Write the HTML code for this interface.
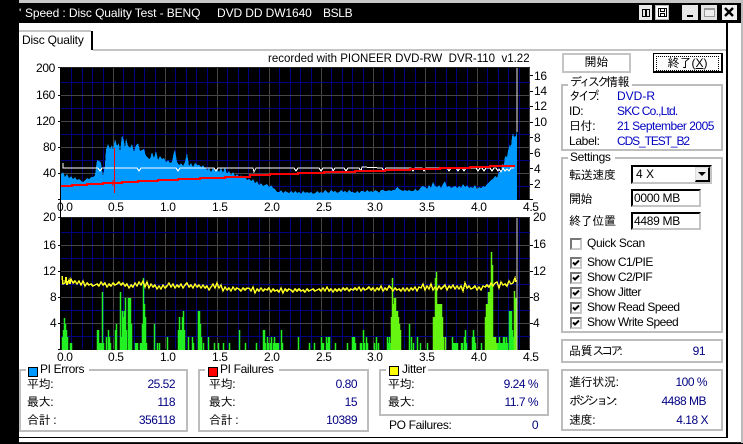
<!DOCTYPE html>
<html><head><meta charset="utf-8"><style>
html,body{margin:0;padding:0;width:743px;height:444px;overflow:hidden;background:#000}
body{position:relative;font:12px/14px "Liberation Sans","IPAGothic","Noto Sans CJK JP",sans-serif;color:#000}
.a{position:absolute}
.t{position:absolute;white-space:pre;line-height:14px;height:14px;letter-spacing:-.35px}
.b{color:#000080;letter-spacing:-.5px}
.k{letter-spacing:-3px}
.g{position:absolute;border:2px solid #bdbdbd;box-sizing:border-box}
.w{position:absolute;background:#fff;height:6px}
.s{position:absolute;width:8px;height:8px;border:1px solid #000}
.c{position:absolute;width:12px;height:12px;box-sizing:border-box;border:2px solid;border-color:#777 #c8c8c8 #c8c8c8 #777;background:#fff;left:570px}
.c svg{position:absolute;left:0;top:0}
.i{position:absolute;box-sizing:border-box;background:#fff;border:2px solid;border-color:#000 #c4c4c4 #c4c4c4 #000}
.tb{position:absolute;top:5px;height:15px;background:#e8e8e8;box-sizing:border-box}
</style></head><body>
<div class="a" style="left:19px;top:0;width:724px;height:3px;background:#c8c8c8"></div>
<div class="a" style="left:19px;top:23px;width:722px;height:420px;background:#fff"></div>
<div class="a" style="left:726px;top:23px;width:2px;height:415px;background:#000"></div>
<div class="a" style="left:19px;top:437px;width:709px;height:1px;background:#000"></div>
<div class="a" style="left:19px;top:442px;width:722px;height:1px;background:#222"></div>
<div class="a" style="left:741px;top:0;width:2px;height:444px;background:#bbb"></div>
<div class="a" style="left:19px;top:443px;width:724px;height:1px;background:#000"></div>
<div class="t" style="left:19px;top:6px;color:#fff">'</div>
<div class="t" style="left:25px;top:6px;color:#fff;letter-spacing:-.1px">Speed : Disc Quality Test - BENQ</div>
<div class="t" style="left:217px;top:6px;color:#fff;letter-spacing:-.1px">DVD DD DW1640</div>
<div class="t" style="left:323px;top:6px;color:#fff">BSLB</div>

<div class="tb" style="left:639px;width:13px"></div>
<div class="tb" style="left:655px;width:14px;background:#fff;border:1px solid #bbb"></div>
<div class="tb" style="left:682px;width:16px"><div class="a" style="left:5px;top:10px;width:6px;height:2px;background:#000"></div></div>
<div class="tb" style="left:701px;width:16px;background:#e4e4e4"><div class="a" style="left:3px;top:3px;width:11px;height:9px;border:1px solid #999;border-top-width:2px;box-sizing:border-box;background:#eee"></div></div>
<div class="tb" style="left:722px;width:15px;background:#f0f0f0"></div>
<svg class="a" style="left:0;top:0" width="743" height="30"><g fill="none" stroke="#000" shape-rendering="crispEdges"><path d="M642.5 9.5h3v7h-3zM646.5 9.5h3v7h-3z"/><path d="M658.5 8.5h8v8h-8zM660.5 8.5h4v3h-4zM660.5 13.5h4v3h-4z"/><path d="M725 8l8 8M733 8l-8 8" stroke-width="2.4" shape-rendering="auto"/></g></svg>

<div class="a" style="left:19px;top:30px;width:72px;height:2px;background:#c4c4c4"></div>
<div class="a" style="left:91px;top:31px;width:2px;height:19px;background:#000"></div>
<div class="a" style="left:93px;top:49px;width:633px;height:2px;background:#c4c4c4"></div>
<div class="t" style="left:22px;top:33px;letter-spacing:-.2px">Disc Quality</div>
<div class="t" style="left:268px;top:52px;font-size:11.5px;letter-spacing:0">recorded with PIONEER DVD-RW  DVR-110  v1.22</div>

<svg class="a" style="left:0;top:0" width="743" height="444">
<rect x="61" y="68" width="469" height="132" fill="#000"/>
<rect x="61" y="218" width="469" height="132" fill="#000"/>
<g shape-rendering="crispEdges" fill="none">
<path stroke="#222" d="M58 67.5H530M58 217.5H530"/>
<g id="v"><path stroke="#000080" d="M71.5 68V200M82.5 68V200M92.5 68V200M103.5 68V200M123.5 68V200M134.5 68V200M144.5 68V200M155.5 68V200M175.5 68V200M186.5 68V200M196.5 68V200M207.5 68V200M227.5 68V200M238.5 68V200M248.5 68V200M259.5 68V200M279.5 68V200M290.5 68V200M300.5 68V200M311.5 68V200M331.5 68V200M342.5 68V200M352.5 68V200M363.5 68V200M383.5 68V200M394.5 68V200M404.5 68V200M415.5 68V200M435.5 68V200M446.5 68V200M456.5 68V200M467.5 68V200M487.5 68V200M498.5 68V200M508.5 68V200M519.5 68V200"/>
<path stroke="#454545" d="M113.5 68V200M165.5 68V200M217.5 68V200M269.5 68V200M321.5 68V200M373.5 68V200M425.5 68V200M477.5 68V200M529.5 68V200"/></g>
<use href="#v" y="150"/>
<path stroke="#000080" d="M61 82.5H530M61 108.5H530M61 134.5H530M61 160.5H530M61 186.5H530M61 232.5H530M61 258.5H530M61 284.5H530M61 310.5H530M61 336.5H530"/>
<path stroke="#454545" d="M61 95.5H530M61 121.5H530M61 147.5H530M61 173.5H530M61 245.5H530M61 271.5H530M61 297.5H530M61 323.5H530"/>
<path stroke="#000" d="M58 95.5h3M58 121.5h3M58 147.5h3M58 173.5h3M58 199.5h3M58 245.5h3M58 271.5h3M58 297.5h3M58 323.5h3M58 349.5h3M530 75.5h3M530 91.5h3M530 106.5h3M530 122.5h3M530 137.5h3M530 153.5h3M530 168.5h3M530 184.5h3M530 199.5h3M530 245.5h3M530 271.5h3M530 297.5h3M530 323.5h3M60.5 68V350M60.5 218V350M58 349.5H530M58 199.5H530"/>
</g>
<g shape-rendering="crispEdges">
<polygon fill="#0099ff" points="61,200 61,174 63,172 65,177 67,174 69,178 71,176 73,179 75,177 77,180 79,179 81,181 83,182 85,180 87,178 89,179 91,177 93,177 95,175 97,160 99,161 101,163 103,176 105,165 106,150 108,144 110,149 112,145 113,150 115,139 117,146 119,143 120,152 122,135 124,141 125,148 126,138 128,146 130,148 132,144 134,152 136,145 138,143 140,151 142,150 144,149 146,156 148,158 150,159 152,152 154,158 156,151 158,160 160,156 162,159 164,158 166,162 168,160 170,163 172,162 174,152 175,150 177,162 179,165 181,163 183,166 185,162 187,153 189,166 191,163 193,167 195,163 197,165 199,165 201,167 203,165 205,168 207,170 209,168 211,172 213,168 215,171 217,170 219,172 221,168 223,173 225,167 227,174 229,171 231,175 233,172 235,176 237,174 239,177 241,175 243,178 245,176 247,180 249,179 251,181 253,179 255,183 257,181 259,185 261,183 263,186 265,185 267,184 269,187 271,185 273,188 275,189 277,192 279,192 281,190 283,193 285,191 287,192 289,193 291,191 293,193 295,191 297,193 299,192 301,194 303,191 305,193 307,192 309,193 311,192 313,194 315,193 317,191 319,193 321,192 323,193 325,190 327,192 329,193 331,190 333,192 335,191 337,193 339,192 341,190 343,192 345,191 347,193 349,190 351,192 353,192 355,193 357,191 359,193 361,191 363,191 365,192 367,190 369,192 371,191 373,192 375,190 377,191 379,193 381,190 383,190 385,191 387,191 389,190 391,191 393,190 395,190 397,187 399,189 401,190 403,191 405,190 407,191 409,190 411,191 413,191 415,189 417,191 419,190 421,187 423,186 425,187 427,189 429,185 431,188 433,182 435,186 437,187 439,185 441,188 443,184 445,181 447,187 449,186 451,188 453,187 455,186 457,188 459,186 461,188 463,184 465,187 467,185 469,188 471,187 473,188 475,185 477,189 479,187 481,188 483,186 485,187 487,184 489,182 491,180 493,179 495,176 497,178 499,172 501,172 502,164 504,165 505,156 507,157 508,151 510,144 511,147 512,137 513,133 514,137 516,136 517,130 517,200"/>
<polyline fill="none" stroke="#fff" stroke-width="1" points="63,163 63,168 98,168 100,171 102,168 137,168 139,171 141,168 176,168 178,171 180,168 214,168 216,171 218,168 253,168 254,172 256,168 294,168 296,171 298,168 319,168 321,171 323,168 332,168 333,171 335,168 344,168 346,171 348,168 359,168 361,171 362,167 382,168 384,171 386,168 411,168 413,171 415,168 422,168 424,171 426,168 447,168 449,171 451,168 456,168 458,171 460,168 462,168 464,171 466,168 476,168 478,171 480,168 482,168 484,171 486,168 490,168 492,171 494,168 496,168 498,171 499,169 501,172 503,168 505,171 507,169 509,171 511,168 514,168"/>
<polyline fill="none" stroke="#f00" stroke-width="2" points="61,186 72,186 72,185 87,185 87,184 103,184 103,183 122,183 122,182 138,182 138,181 158,181 158,180 178,180 178,179 200,179 200,178 225,178 225,177 250,177 250,175 270,175 270,174 298,174 298,173 324,173 324,172 355,172 355,171 385,171 385,170 410,170 410,169 440,169 440,168 470,168 470,167 490,167 490,166 515,166"/>
<path d="M114.5 148V193M113 180V186" stroke="#f00" stroke-width="1" fill="none"/>
<path d="M517 68V132" stroke="#e8e8e8" stroke-width="1"/>
<path fill="none" stroke="#22f022" stroke-width="1.5" shape-rendering="auto" d="M62.5 350v-13M63.5 350v-20M64.5 350v-32M65.5 350v-26M66.5 350v-20M67.5 350v-13M70.5 350v-7M71.5 350v-7M97.5 350v-20M98.5 350v-20M99.5 350v-7M100.5 350v-7M101.5 350v-7M102.5 350v-58M103.5 350v-7M106.5 350v-13M108.5 350v-20M109.5 350v-13M110.5 350v-7M115.5 350v-20M116.5 350v-26M120.5 350v-58M121.5 350v-13M122.5 350v-39M123.5 350v-33M124.5 350v-39M125.5 350v-52M126.5 350v-20M128.5 350v-52M129.5 350v-52M130.5 350v-52M131.5 350v-26M135.5 350v-7M136.5 350v-7M137.5 350v-7M140.5 350v-7M141.5 350v-7M142.5 350v-26M143.5 350v-72M144.5 350v-46M145.5 350v-33M146.5 350v-7M154.5 350v-26M157.5 350v-7M159.5 350v-7M167.5 350v-13M178.5 350v-20M179.5 350v-33M180.5 350v-20M181.5 350v-20M182.5 350v-33M183.5 350v-39M184.5 350v-20M188.5 350v-13M192.5 350v-13M193.5 350v-7M198.5 350v-39M199.5 350v-39M200.5 350v-26M201.5 350v-13M203.5 350v-7M208.5 350v-13M214.5 350v-7M218.5 350v-7M223.5 350v-7M229.5 350v-7M239.5 350v-20M245.5 350v-7M256.5 350v-7M263.5 350v-20M264.5 350v-20M265.5 350v-7M267.5 350v-13M268.5 350v-7M270.5 350v-7M271.5 350v-13M273.5 350v-7M274.5 350v-13M275.5 350v-7M276.5 350v-7M277.5 350v-7M278.5 350v-7M281.5 350v-20M282.5 350v-7M298.5 350v-13M309.5 350v-7M314.5 350v-7M321.5 350v-13M322.5 350v-7M323.5 350v-7M326.5 350v-13M327.5 350v-7M328.5 350v-13M329.5 350v-13M335.5 350v-7M347.5 350v-7M352.5 350v-13M353.5 350v-13M354.5 350v-13M355.5 350v-7M360.5 350v-7M361.5 350v-7M363.5 350v-20M364.5 350v-7M366.5 350v-13M367.5 350v-7M374.5 350v-7M376.5 350v-13M378.5 350v-7M387.5 350v-13M388.5 350v-7M389.5 350v-13M390.5 350v-7M409.5 350v-26M411.5 350v-13M413.5 350v-7M417.5 350v-13M420.5 350v-7M427.5 350v-7M452.5 350v-13M453.5 350v-7M454.5 350v-7M455.5 350v-7M456.5 350v-7M457.5 350v-7M461.5 350v-7M462.5 350v-7M464.5 350v-13M465.5 350v-20M466.5 350v-7M472.5 350v-13M473.5 350v-20M474.5 350v-13M475.5 350v-7M481.5 350v-7M497.5 350v-7M498.5 350v-7M499.5 350v-13M500.5 350v-7M501.5 350v-7M502.5 350v-7M503.5 350v-13M504.5 350v-13M505.5 350v-7M506.5 350v-13M507.5 350v-7M509.5 350v-39M510.5 350v-39M511.5 350v-39M512.5 350v-20M513.5 350v-13"/>
<path fill="none" stroke="#66f510" stroke-width="1.5" shape-rendering="auto" d="M391.5 350v-33M392.5 350v-72M393.5 350v-46M394.5 350v-52M395.5 350v-52M396.5 350v-39M397.5 350v-39M398.5 350v-33M399.5 350v-26M400.5 350v-20M433.5 350v-33M434.5 350v-33M435.5 350v-72M436.5 350v-78M437.5 350v-46M438.5 350v-46M439.5 350v-46M440.5 350v-46M441.5 350v-46M442.5 350v-33M443.5 350v-13M445.5 350v-13M485.5 350v-33M486.5 350v-46M487.5 350v-46M488.5 350v-58M489.5 350v-58M490.5 350v-65M491.5 350v-98M492.5 350v-85M493.5 350v-13M494.5 350v-13M495.5 350v-13M496.5 350v-7M514.5 350v-59M515.5 350v-52M516.5 350v-52"/>
<path d="M517 218V350" stroke="#d8d8d8" stroke-width="1"/>
<polyline fill="none" stroke="#ffff22" stroke-width="1.5" points="62,276 63,284 65,283 66,277 67,285 69,280 70,284 71,279 73,283 75,281 77,284 79,281 81,285 83,281 85,286 87,283 89,285 91,284 93,286 95,285 97,284 99,286 101,282 103,285 105,283 107,287 109,284 111,286 113,283 115,285 117,284 119,282 121,285 123,283 125,286 127,284 129,288 131,285 133,287 135,283 137,286 139,282 141,285 143,281 145,287 147,282 149,288 151,284 153,287 155,285 157,289 159,286 161,289 163,285 165,288 167,286 169,283 171,287 173,284 175,288 177,285 179,287 181,284 183,288 185,285 187,283 189,287 191,285 193,288 195,284 197,287 199,285 201,288 203,285 205,288 207,286 209,290 211,287 213,284 215,288 217,283 219,288 221,285 223,291 225,287 227,290 229,288 231,291 233,287 235,290 237,288 239,289 241,291 243,288 245,290 247,288 249,288 251,291 253,287 255,293 257,289 259,291 261,288 263,291 265,289 267,290 269,288 271,292 273,289 275,291 277,290 279,292 281,288 283,293 285,289 287,291 289,289 291,290 293,292 295,289 297,291 299,289 301,291 303,290 305,292 307,289 309,291 311,290 313,289 315,291 317,290 319,289 321,291 323,288 325,291 327,287 329,291 331,289 333,292 335,289 337,291 339,289 341,291 343,288 345,290 347,288 349,291 351,289 353,290 355,288 357,290 359,287 361,291 363,288 365,290 367,289 369,287 371,290 373,288 375,291 377,288 379,290 381,286 383,291 385,288 387,290 389,286 391,288 393,291 395,288 397,290 399,289 401,291 403,288 405,291 407,288 409,291 411,288 413,290 415,287 417,291 419,287 421,288 423,284 425,290 427,286 429,289 431,284 433,290 435,287 437,290 439,286 441,289 443,287 445,285 447,290 449,286 451,288 453,285 455,289 457,286 459,289 461,286 463,291 465,283 467,288 469,286 471,289 473,288 475,286 477,290 479,287 481,290 483,286 485,287 487,285 489,287 491,283 493,286 495,283 497,282 499,288 501,282 503,285 505,284 507,286 509,281 511,284 513,283 515,278 516,282"/>
</g>
</svg>

<div class="t" style="left:36px;top:61px">200</div><div class="t" style="left:36px;top:88px">160</div><div class="t" style="left:36px;top:114px">120</div><div class="t" style="left:43px;top:140px">80</div><div class="t" style="left:43px;top:166px">40</div>
<div class="t" style="left:43px;top:210px">20</div><div class="t" style="left:43px;top:238px">16</div><div class="t" style="left:43px;top:264px">12</div><div class="t" style="left:50px;top:290px">8</div><div class="t" style="left:50px;top:316px">4</div>
<div class="t" style="left:534px;top:69px">16</div><div class="t" style="left:534px;top:84px">14</div><div class="t" style="left:534px;top:99px">12</div><div class="t" style="left:534px;top:115px">10</div><div class="t" style="left:534px;top:131px">8</div><div class="t" style="left:534px;top:146px">6</div><div class="t" style="left:534px;top:162px">4</div><div class="t" style="left:534px;top:177px">2</div>
<div class="t" style="left:533px;top:210px">20</div><div class="t" style="left:533px;top:237px">16</div><div class="t" style="left:533px;top:264px">12</div><div class="t" style="left:533px;top:290px">8</div><div class="t" style="left:533px;top:316px">4</div>

<div class="t" style="left:57px;top:200px">0.0</div><div class="t" style="left:108px;top:200px">0.5</div><div class="t" style="left:160px;top:200px">1.0</div><div class="t" style="left:212px;top:200px">1.5</div><div class="t" style="left:264px;top:200px">2.0</div><div class="t" style="left:316px;top:200px">2.5</div><div class="t" style="left:367px;top:200px">3.0</div><div class="t" style="left:419px;top:200px">3.5</div><div class="t" style="left:471px;top:200px">4.0</div><div class="t" style="left:523px;top:200px">4.5</div>
<div class="t" style="left:57px;top:350px">0.0</div><div class="t" style="left:108px;top:350px">0.5</div><div class="t" style="left:160px;top:350px">1.0</div><div class="t" style="left:212px;top:350px">1.5</div><div class="t" style="left:264px;top:350px">2.0</div><div class="t" style="left:316px;top:350px">2.5</div><div class="t" style="left:367px;top:350px">3.0</div><div class="t" style="left:419px;top:350px">3.5</div><div class="t" style="left:471px;top:350px">4.0</div><div class="t" style="left:523px;top:350px">4.5</div>

<div class="g" style="left:19px;top:369px;width:169px;height:63px"></div>
<div class="w" style="left:26px;top:366px;width:63px"></div>
<div class="s" style="left:28px;top:367px;background:#0099ff"></div>
<div class="t" style="left:40px;top:362px">PI Errors</div>
<div class="t" style="left:27px;top:377px">平均:</div><div class="t b" style="right:568px;top:377px">25.52</div>
<div class="t" style="left:27px;top:395px">最大:</div><div class="t b" style="right:568px;top:395px">118</div>
<div class="t" style="left:27px;top:413px">合計 :</div><div class="t b" style="right:568px;top:413px">356118</div>

<div class="g" style="left:198px;top:369px;width:171px;height:63px"></div>
<div class="w" style="left:205px;top:366px;width:74px"></div>
<div class="s" style="left:208px;top:367px;background:#f00"></div>
<div class="t" style="left:220px;top:362px">PI Failures</div>
<div class="t" style="left:209px;top:377px">平均:</div><div class="t b" style="right:386px;top:377px">0.80</div>
<div class="t" style="left:209px;top:395px">最大:</div><div class="t b" style="right:386px;top:395px">15</div>
<div class="t" style="left:209px;top:413px">合計 :</div><div class="t b" style="right:386px;top:413px">10389</div>

<div class="g" style="left:379px;top:369px;width:170px;height:47px"></div>
<div class="w" style="left:386px;top:366px;width:42px"></div>
<div class="s" style="left:389px;top:366px;background:#ff0"></div>
<div class="t" style="left:402px;top:362px">Jitter</div>
<div class="t" style="left:388px;top:377px">平均:</div><div class="t b" style="right:205px;top:377px">9.24 %</div>
<div class="t" style="left:388px;top:395px">最大:</div><div class="t b" style="right:205px;top:395px">11.7 %</div>
<div class="t" style="left:389px;top:418px">PO Failures:</div><div class="t b" style="right:205px;top:418px">0</div>

<div class="a" style="left:562px;top:53px;width:69px;height:20px;box-sizing:border-box;border:2px solid #c4c4c4;text-align:center;line-height:15px">開始</div>
<div class="a" style="left:653px;top:53px;width:70px;height:20px;box-sizing:border-box;border:1px solid #000;border-right-width:2px;border-bottom-width:2px;padding:2px"><div style="border:1px dotted #000;height:13px;line-height:13px;text-align:center">終了(<u>X</u>)</div></div>

<div class="g" style="left:561px;top:84px;width:162px;height:67px"></div>
<div class="w" style="left:568px;top:81px;width:64px"></div>
<div class="t" style="left:570px;top:75px"><span class="k">ディスク</span>情報</div>
<div class="t" style="left:569px;top:89px"><span class="k">タイプ</span>:</div><div class="t b" style="left:617px;top:89px;color:#0000c0;letter-spacing:0">DVD-R</div>
<div class="t" style="left:569px;top:104px">ID:</div><div class="t b" style="left:617px;top:104px;color:#0000c0;letter-spacing:-.8px">SKC Co.,Ltd.</div>
<div class="t" style="left:569px;top:119px">日付:</div><div class="t b" style="left:617px;top:119px;color:#0000c0">21 September 2005</div>
<div class="t" style="left:569px;top:134px">Label:</div><div class="t b" style="left:617px;top:134px;color:#0000c0;letter-spacing:-1.1px">CDS_TEST_B2</div>

<div class="g" style="left:561px;top:157px;width:162px;height:176px"></div>
<div class="w" style="left:568px;top:154px;width:47px"></div>
<div class="t" style="left:570px;top:150px">Settings</div>
<div class="t" style="left:569px;top:168px">転送速度</div>
<div class="i" style="left:631px;top:165px;width:81px;height:19px;line-height:15px;padding-left:3px">4 X</div>
<div class="a" style="left:695px;top:167px;width:15px;height:15px;box-sizing:border-box;background:#eee;border:1px solid #000;border-width:1px 2px 2px 1px;border-color:#ddd #000 #000 #ddd"></div>
<svg class="a" style="left:698px;top:172px" width="9" height="5"><path d="M0 0h8L4 4z" fill="#000"/></svg>
<div class="t" style="left:569px;top:192px">開始</div>
<div class="i" style="left:631px;top:189px;width:70px;height:18px;line-height:14px;padding-left:1px;letter-spacing:-.3px">0000 MB</div>
<div class="t" style="left:569px;top:214px">終了位置</div>
<div class="i" style="left:631px;top:212px;width:70px;height:18px;line-height:14px;padding-left:1px;letter-spacing:-.3px">4489 MB</div>

<div class="c" style="top:238px"></div><div class="t" style="left:587px;top:236px">Quick Scan</div>
<div class="c" style="top:257px"><svg width="8" height="8"><path d="M1 3.5l2 2 4-4" fill="none" stroke="#000" stroke-width="2"/></svg></div><div class="t" style="left:587px;top:255px;letter-spacing:-.5px">Show C1/PIE</div>
<div class="c" style="top:272px"><svg width="8" height="8"><path d="M1 3.5l2 2 4-4" fill="none" stroke="#000" stroke-width="2"/></svg></div><div class="t" style="left:587px;top:270px;letter-spacing:-.5px">Show C2/PIF</div>
<div class="c" style="top:287px"><svg width="8" height="8"><path d="M1 3.5l2 2 4-4" fill="none" stroke="#000" stroke-width="2"/></svg></div><div class="t" style="left:587px;top:285px;letter-spacing:-.5px">Show Jitter</div>
<div class="c" style="top:302px"><svg width="8" height="8"><path d="M1 3.5l2 2 4-4" fill="none" stroke="#000" stroke-width="2"/></svg></div><div class="t" style="left:587px;top:300px;letter-spacing:-.5px">Show Read Speed</div>
<div class="c" style="top:317px"><svg width="8" height="8"><path d="M1 3.5l2 2 4-4" fill="none" stroke="#000" stroke-width="2"/></svg></div><div class="t" style="left:587px;top:315px;letter-spacing:-.5px">Show Write Speed</div>

<div class="g" style="left:561px;top:339px;width:162px;height:24px"></div>
<div class="t" style="left:569px;top:344px">品質<span class="k">スコア</span>:</div><div class="t b" style="right:38px;top:344px">91</div>

<div class="g" style="left:561px;top:369px;width:162px;height:62px"></div>
<div class="t" style="left:569px;top:375px">進行状況:</div><div class="t b" style="right:36px;top:375px">100 %</div>
<div class="t" style="left:569px;top:394px"><span class="k">ポジション</span>:</div><div class="t b" style="right:37px;top:394px">4488 MB</div>
<div class="t" style="left:569px;top:413px">速度:</div><div class="t b" style="right:35px;top:413px">4.18 X</div>
</body></html>
